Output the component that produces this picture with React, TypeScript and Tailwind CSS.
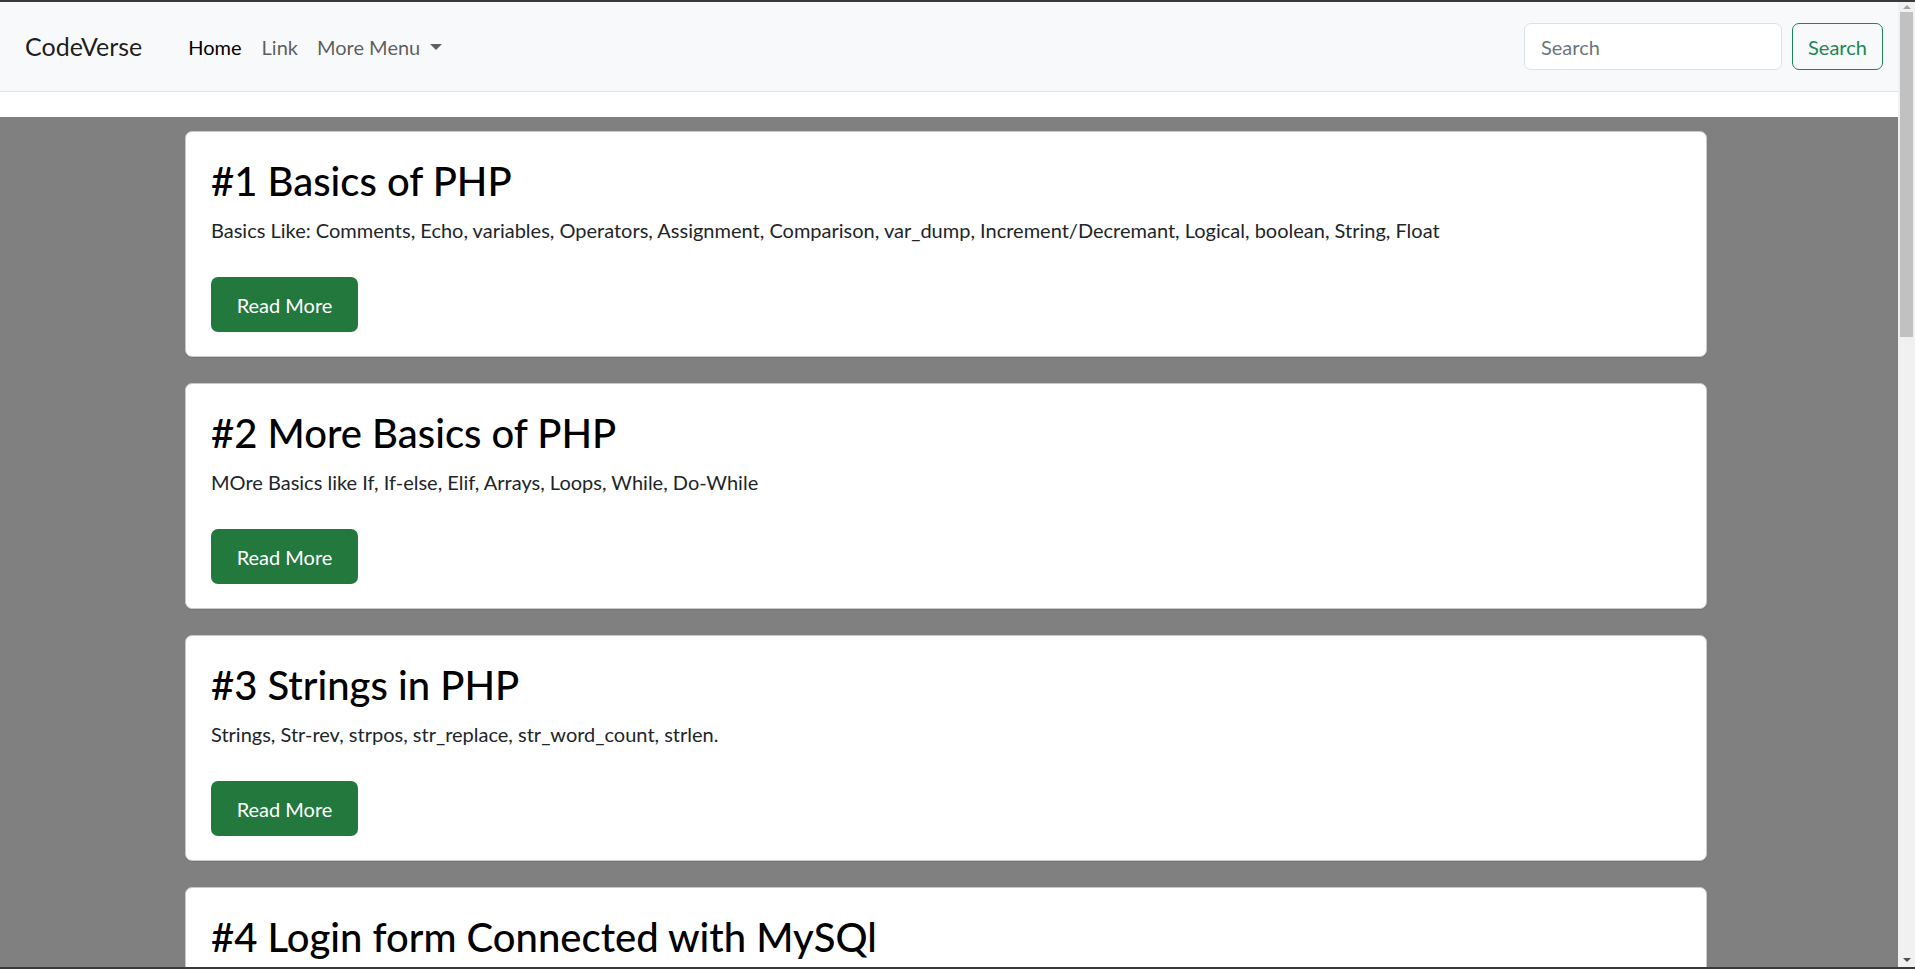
import React from 'react'

const posts = [
    {
        title: '#1 Basics of PHP',
        desc: 'Basics Like: Comments, Echo, variables, Operators, Assignment, Comparison, var_dump, Increment/Decremant, Logical, boolean, String, Float',
    },
    {
        title: '#2 More Basics of PHP',
        desc: 'MOre Basics like If, If-else, Elif, Arrays, Loops, While, Do-While',
    },
    {
        title: '#3 Strings in PHP',
        desc: 'Strings, Str-rev, strpos, str_replace, str_word_count, strlen.',
    },
    {
        title: '#4 Login form Connected with MySQl',
        desc: 'Login form, Signup form, Sessions, Logout and Database Connection',
    },
]

function Navbar() {
    return (
        <nav className="h-[90px] shrink-0 bg-[#f8f9fa] border-b border-[#dee2e6] flex items-center pl-[25px] pr-[15px]">
            <a className="text-[25px] text-black/90 leading-none mr-[46px]">CodeVerse</a>
            <ul className="flex items-center text-[20px] leading-none">
                <li><a className="text-black">Home</a></li>
                <li className="ml-[20px]"><a className="text-black/65">Link</a></li>
                <li className="ml-[19px] flex items-center text-black/65">
                    <a>More Menu</a>
                    <span className="ml-[10px] w-0 h-0 border-l-[6px] border-r-[6px] border-t-[6px] border-l-transparent border-r-transparent border-t-[#5f6061]" />
                </li>
            </ul>
            <form className="ml-auto flex items-center gap-[10px]">
                <input
                    placeholder="Search"
                    className="w-[258px] h-[47px] px-[16px] bg-white border border-[#dee2e6] rounded-[7px] text-[20px] placeholder:text-[#6c757d] outline-none"
                />
                <button
                    type="button"
                    className="w-[91px] h-[47px] border border-[#198754] rounded-[7px] text-[20px] text-[#198754]"
                >
                    Search
                </button>
            </form>
        </nav>
    )
}

function PostCard({ title, desc }: { title: string; desc: string }) {
    return (
        <div className="bg-white border border-[#c9c9c9] rounded-[7px] shadow-[0_1px_1px_rgba(0,0,0,0.08)] h-[226px] shrink-0 px-[25px] pt-[25px]">
            <h2 className="text-[40px] leading-[48px] font-medium text-black">{title}</h2>
            <p className="text-[20px] leading-[30px] mt-[10px] text-[#212529]">{desc}</p>
            <button
                type="button"
                className="mt-[32px] w-[147px] h-[55px] bg-[#23783e] rounded-[7px] text-[20px] text-white"
            >
                Read More
            </button>
        </div>
    )
}

function Scrollbar() {
    return (
        <div className="w-[17px] shrink-0 bg-[#f1f1f1] flex flex-col items-center">
            <div className="h-[10px] flex items-center justify-center">
                <span className="w-0 h-0 border-l-[4px] border-r-[4px] border-b-[4px] border-l-transparent border-r-transparent border-b-[#a3a3a3]" />
            </div>
            <div className="w-[13px] h-[325px] bg-[#c1c1c1]" />
            <div className="mt-auto h-[14px] flex items-center justify-center">
                <span className="w-0 h-0 border-l-[4px] border-r-[4px] border-t-[4px] border-l-transparent border-r-transparent border-t-[#505050]" />
            </div>
        </div>
    )
}

export default function App() {
    return (
        <div
            className="h-screen w-full overflow-hidden flex flex-col border-y-2 border-[#3a3a3a] bg-white"
            style={{ fontFamily: 'Lato, "Open Sans", sans-serif' }}
        >
            <div className="flex flex-1 min-h-0">
                <div className="flex-1 min-w-0 flex flex-col">
                    <Navbar />
                    <main className="mt-[25px] flex-1 min-h-0 bg-[#808080] pt-[14px] pl-[185px] overflow-hidden">
                        <div className="w-[1522px] flex flex-col gap-[26px]">
                            {posts.map((p) => (
                                <PostCard key={p.title} title={p.title} desc={p.desc} />
                            ))}
                        </div>
                    </main>
                </div>
                <Scrollbar />
            </div>
        </div>
    )
}
